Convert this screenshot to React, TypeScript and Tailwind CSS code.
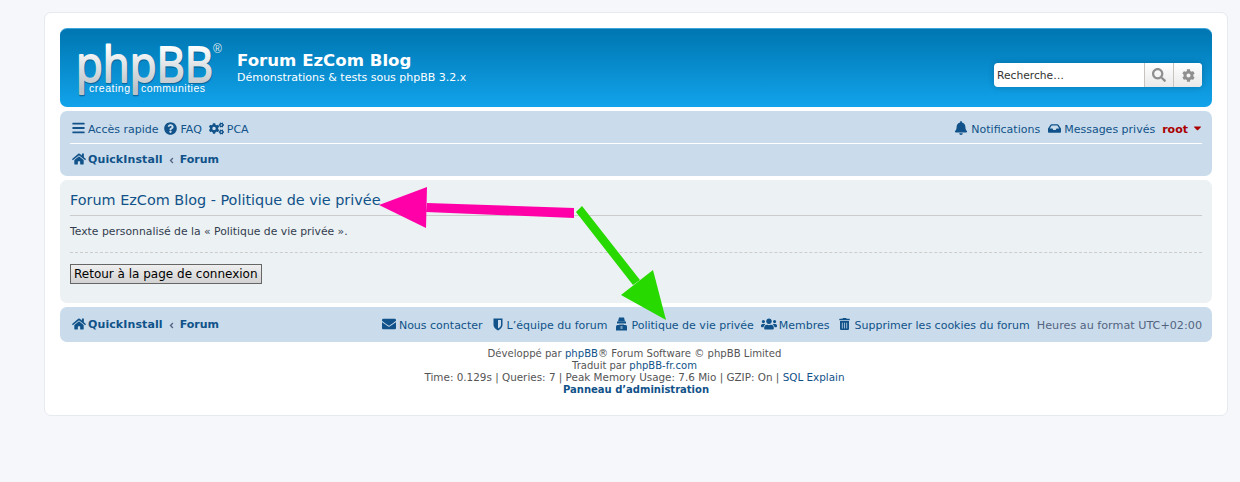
import {
  FaAngleLeft,
  FaBars,
  FaBell,
  FaCaretDown,
  FaCog,
  FaCogs,
  FaEnvelope,
  FaHome,
  FaInbox,
  FaQuestionCircle,
  FaSearch,
  FaTrashAlt,
  FaUsers,
} from "react-icons/fa";

const linkColor = "text-[#105289]";

function Crumbs() {
  return (
    <div className="flex items-center pb-[2px] text-[11px] font-bold text-[#105289] [&>span]:pt-[4px]">
      <FaHome className="mr-[2px] h-[14px] w-[14px]" />
      <span className="tracking-[0.1px]">QuickInstall</span>
      <FaAngleLeft className="mx-[5px] mt-[3px] h-[9px] w-[7px] text-[#536482]" />
      <span>Forum</span>
    </div>
  );
}

function ShieldIcon() {
  return (
    <svg width="10" height="13" viewBox="0 0 10 13" className="ml-[10px] shrink-0">
      <path d="M0.5 0.5h9v6.5c0 2.6-2.4 4.5-4.5 5.5C2.9 11.5 0.5 9.6 0.5 7z" fill="#105289" />
      <path d="M5 2v8.6c1.5-0.9 3-2.2 3-3.8V2z" fill="#cadceb" />
    </svg>
  );
}

function PrivacyIcon() {
  return (
    <svg width="11" height="14" viewBox="0 0 11 14" className="ml-[9px] shrink-0">
      <path d="M3 0.5h5l1 4H2z" fill="#105289" />
      <rect x="1" y="4.5" width="9" height="2" fill="#105289" />
      <rect x="3" y="6.5" width="5" height="1.5" fill="#7f9fbc" />
      <path d="M1.5 8h8c1 0 1.5 0.8 1.5 2v3.5H0V10c0-1.2 0.5-2 1.5-2z" fill="#105289" />
      <rect x="4.5" y="9" width="2" height="3" fill="#7f9fbc" />
    </svg>
  );
}

function Logo() {
  return (
    <svg width="150" height="60" viewBox="0 0 150 60" className="shrink-0">
      <defs>
        <linearGradient id="logoFill" gradientUnits="userSpaceOnUse" x1="0" y1="2" x2="0" y2="46">
          <stop offset="0" stopColor="#ffffff" />
          <stop offset="1" stopColor="#bcc3c8" />
        </linearGradient>
      </defs>
      <text
        x="1.5"
        y="40"
        textLength="137"
        lengthAdjust="spacingAndGlyphs"
        fontFamily="'Open Sans', sans-serif"
        fontSize="50"
        fill="#0a6a9f"
        stroke="#0a6a9f"
        strokeWidth="2.4"
        strokeLinejoin="round"
      >
        phpBB
      </text>
      <text
        x="1"
        y="39"
        textLength="137"
        lengthAdjust="spacingAndGlyphs"
        fontFamily="'Open Sans', sans-serif"
        fontSize="50"
        fill="url(#logoFill)"
        stroke="url(#logoFill)"
        strokeWidth="1.8"
        strokeLinejoin="round"
      >
        phpBB
      </text>
      <text x="138" y="10" fontFamily="'Liberation Sans', sans-serif" fontSize="12" fill="#dfe6ea">
        ®
      </text>
      <text x="14" y="49" textLength="41" fontFamily="'Liberation Sans', sans-serif" fontSize="10.5" fill="#ffffff">
        creating
      </text>
      <text x="66" y="49" textLength="64" fontFamily="'Liberation Sans', sans-serif" fontSize="10.5" fill="#ffffff">
        communities
      </text>
    </svg>
  );
}

function Arrows() {
  return (
    <svg className="pointer-events-none absolute left-0 top-0" width="1240" height="482">
      <polygon points="427,203 574,208 574,218 426,212" fill="#ff00a8" />
      <polygon points="379,205 427,187 426,228" fill="#ff00a8" />
      <polygon points="576,212 582,206 640,280 633,285" fill="#28d900" />
      <polygon points="653,270 621,295 666,320" fill="#28d900" />
    </svg>
  );
}

export default function App() {
  return (
    <div
      className="relative h-[482px] overflow-hidden bg-[#f5f7fa] pt-3 pr-3 pl-11 text-[11px] text-[#536482]"
      style={{ fontFamily: "'DejaVu Sans', Verdana, sans-serif" }}
    >
      <div className="h-[404px] rounded-[7px] border border-[#e6e9ed] bg-white px-[15px] pt-[15px]">
        {/* Header */}
        <div className="flex h-[79px] items-start rounded-[7px] border-t border-[#3ea6da] bg-gradient-to-b from-[#0076b1] to-[#12a3eb] px-[5px] text-white">
          <div className="mt-[14px] ml-[10px]">
            <Logo />
          </div>
          <div className="mt-[21px] ml-[12px]">
            <div className="text-[16.6px] leading-[22px] font-bold">Forum EzCom Blog</div>
            <div className="text-[11px] leading-[12px]">Démonstrations &amp; tests sous phpBB 3.2.x</div>
          </div>
          <div className="mt-[34px] mr-[5px] ml-auto flex h-6 w-[208px] overflow-hidden rounded-[4px] bg-white shadow-[0_0_6px_rgba(0,0,0,0.2)]">
            <div className="flex-1 pt-[1px] pl-[3px] text-[10.7px] leading-6 text-[#333]">Recherche…</div>
            <div className="flex w-[29px] items-center justify-center border-l border-[#c7c3bf] bg-gradient-to-b from-white to-[#e9e9e9] text-[#8f8f8f]">
              <FaSearch className="h-[14px] w-[14px]" />
            </div>
            <div className="flex w-[29px] items-center justify-center border-l border-[#c7c3bf] bg-gradient-to-b from-white to-[#e9e9e9] text-[#8f8f8f]">
              <FaCog className="h-[13px] w-[13px]" />
            </div>
          </div>
        </div>

        {/* Top navbar */}
        <div className="mt-1 h-[65px] rounded-[7px] bg-[#cadceb] px-[10px]">
          <div className={`flex h-[33px] items-center border-b border-white pt-[2px] [&>span]:pt-[4px] ${linkColor}`}>
            <FaBars className="ml-[2px] h-[14px] w-[13px]" />
            <span className="ml-[3px]">Accès rapide</span>
            <FaQuestionCircle className="ml-[6px] h-[13px] w-[13px]" />
            <span className="ml-[3px]">FAQ</span>
            <FaCogs className="ml-[7px] h-[15px] w-[15px]" />
            <span className="ml-[3px]">PCA</span>
            <FaBell className="ml-auto h-[14px] w-[14px]" />
            <span className="ml-[3px]">Notifications</span>
            <FaInbox className="ml-[8px] h-[13px] w-[13px]" />
            <span className="ml-[3px]">Messages privés</span>
            <span className="ml-[7px] font-bold text-[#aa0000]">root</span>
            <FaCaretDown className="ml-[5px] h-[12px] w-[9px] text-[#aa0000]" />
          </div>
          <div className="flex h-[31px] items-center pl-[2px]">
            <Crumbs />
          </div>
        </div>

        {/* Panel */}
        <div className="mt-1 h-[123px] rounded-[7px] bg-[#ecf1f3] px-[10px] pt-[10px] text-[#333]">
          <h2 className="h-[26px] border-b border-[#cccccc] text-[14.4px] leading-[20px] text-[#105289]">
            Forum EzCom Blog - Politique de vie privée
          </h2>
          <p className="mt-[9px] text-[10.8px] leading-[14px] text-[#323d4f]">
            Texte personnalisé de la « Politique de vie privée ».
          </p>
          <div className="mt-[13px] border-t border-dashed border-[#cccccc]" />
          <button className="mt-[11px] block h-5 border border-[#666] bg-gradient-to-b from-[#efefef] to-[#d2d2d2] px-[3px] text-[12px] leading-[18px] text-black">
            Retour à la page de connexion
          </button>
        </div>

        {/* Bottom navbar */}
        <div className="mt-1 flex h-[35px] items-center rounded-[7px] bg-[#cadceb] px-[10px]">
          <div className="pl-[2px]">
            <Crumbs />
          </div>
          <div className={`ml-auto flex items-center [&>span]:pt-[4px] ${linkColor}`}>
            <FaEnvelope className="h-[14px] w-[14px]" />
            <span className="ml-[3px]">Nous contacter</span>
            <ShieldIcon />
            <span className="ml-[4px]">L’équipe du forum</span>
            <PrivacyIcon />
            <span className="ml-[4px]">Politique de vie privée</span>
            <FaUsers className="ml-[7px] h-[16px] w-[16px]" />
            <span className="ml-[2px]">Membres</span>
            <FaTrashAlt className="ml-[9px] h-[12px] w-[11px]" />
            <span className="ml-[5px]">Supprimer les cookies du forum</span>
            <span className="ml-[7px] text-[11.2px] text-[#536482]">Heures au format UTC+02:00</span>
          </div>
        </div>

        {/* Copyright */}
        <div className="mt-[6px] text-center text-[10px] leading-[12px] text-[#555555]">
          <div className="pr-[3px] text-[10.1px]">
            Développé par <span className={linkColor}>phpBB</span>® Forum Software © phpBB Limited
          </div>
          <div className="pr-[3px]">
            Traduit par <span className={linkColor}>phpBB-fr.com</span>
          </div>
          <div className="h-3 pr-[3px] text-[10.4px] leading-[11px]">
            Time: 0.129s | Queries: 7 | Peak Memory Usage: 7.6 Mio | GZIP: On |{" "}
            <span className={linkColor}>SQL Explain</span>
          </div>
          <div className={`font-bold ${linkColor}`}>Panneau d’administration</div>
        </div>
      </div>
      <Arrows />
    </div>
  );
}
